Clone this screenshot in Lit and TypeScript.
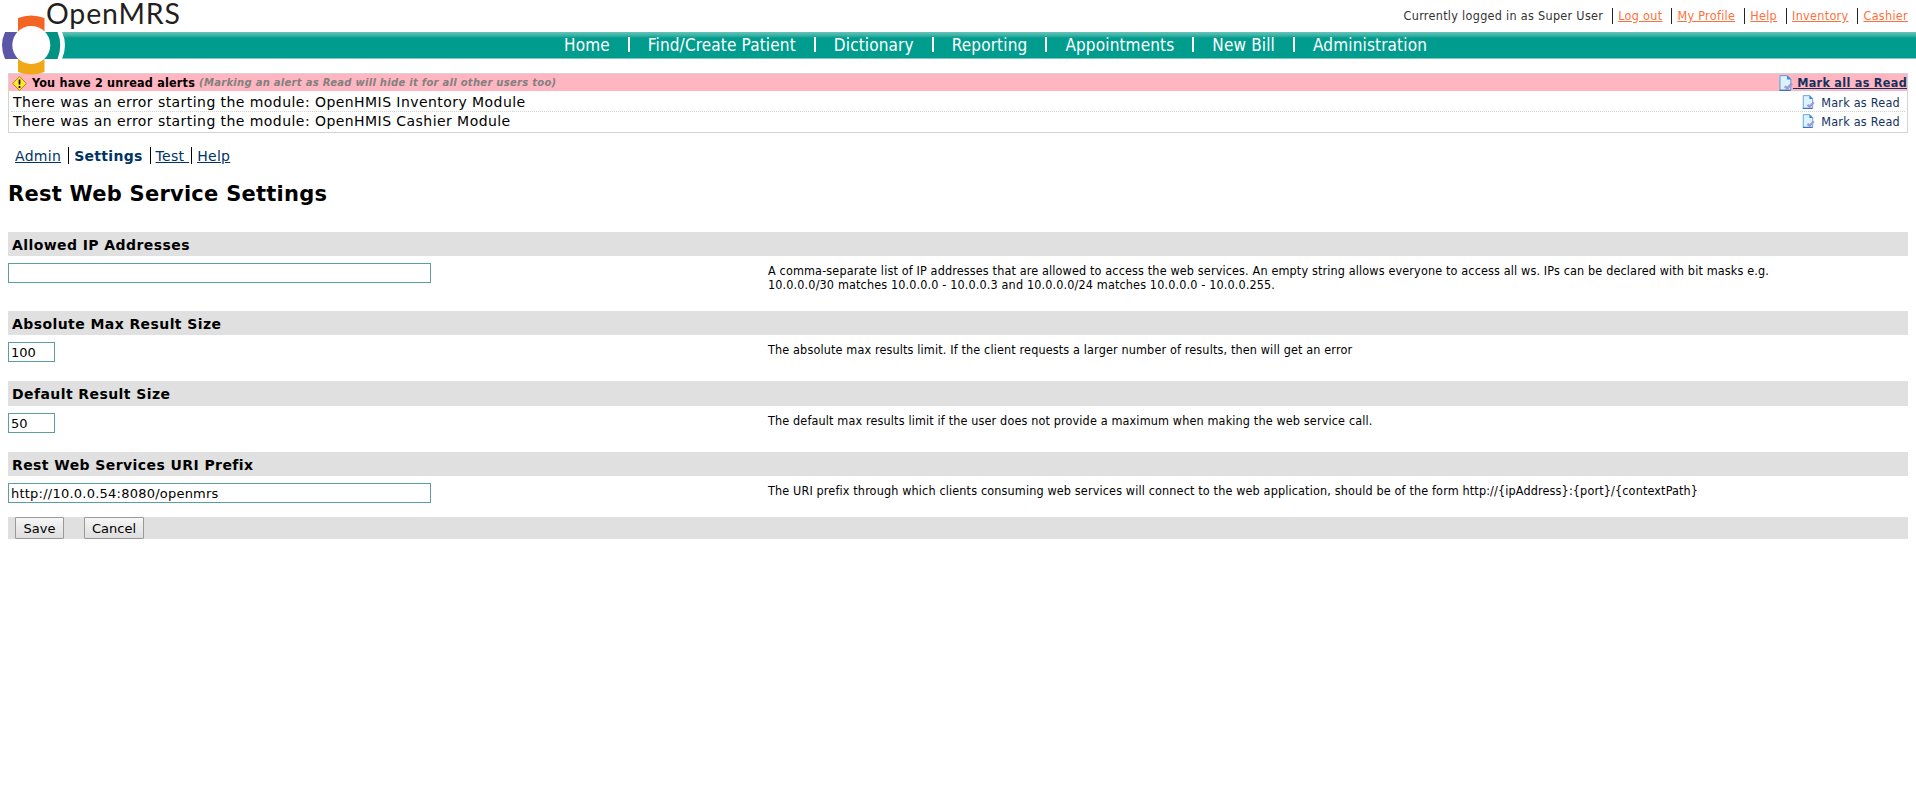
import { LitElement, html, css, svg } from 'lit';
import { customElement, property } from 'lit/decorators.js';

interface Setting {
  title: string;
  value: string;
  wide: boolean;
  description: string;
}

const NAV = [
  'Home',
  'Find/Create Patient',
  'Dictionary',
  'Reporting',
  'Appointments',
  'New Bill',
  'Administration',
];

const USER_LINKS = ['Log out', 'My Profile', 'Help', 'Inventory', 'Cashier'];

const ALERTS = [
  'There was an error starting the module: OpenHMIS Inventory Module',
  'There was an error starting the module: OpenHMIS Cashier Module',
];

const SETTINGS: Setting[] = [
  {
    title: 'Allowed IP Addresses',
    value: '',
    wide: true,
    description:
      'A comma-separate list of IP addresses that are allowed to access the web services. An empty string allows everyone to access all ws. IPs can be declared with bit masks e.g. 10.0.0.0/30 matches 10.0.0.0 - 10.0.0.3 and 10.0.0.0/24 matches 10.0.0.0 - 10.0.0.255.',
  },
  {
    title: 'Absolute Max Result Size',
    value: '100',
    wide: false,
    description:
      'The absolute max results limit. If the client requests a larger number of results, then will get an error',
  },
  {
    title: 'Default Result Size',
    value: '50',
    wide: false,
    description:
      'The default max results limit if the user does not provide a maximum when making the web service call.',
  },
  {
    title: 'Rest Web Services URI Prefix',
    value: 'http://10.0.0.54:8080/openmrs',
    wide: true,
    description:
      'The URI prefix through which clients consuming web services will connect to the web application, should be of the form http://{ipAddress}:{port}/{contextPath}',
  },
];

// page with a folded corner and a check mark over it
const readIcon = svg`
  <path d="M1 .7h7.500l3.300 3.300v11.300H1z" fill="#dcf3fc" stroke="#5a9be0" />
  <path d="M.5 15.300h11" stroke="#2f6fc0" stroke-width="1.200" />
  <path d="M8 .5v4h4.200z" fill="#3f86d6" />
  <path d="M5.800 11.200l2.600 2.200 4.600-5" fill="none" stroke="#a19ad4" stroke-width="2.600" />
`;

@customElement('app-header')
class AppHeader extends LitElement {
  static styles = css`
    :host {
      display: block;
      position: relative;
      height: 59px;
    }
    .user-bar {
      display: flex;
      justify-content: flex-end;
      height: 24px;
      padding: 8px 8px 0 0;
      box-sizing: border-box;
      margin-bottom: 8px;
      font-size: 12.5px;
      letter-spacing: 0.3px;
      line-height: 16px;
      color: #333;
      font-family: 'DejaVu Sans Condensed', 'DejaVu Sans', sans-serif;
      font-stretch: condensed;
    }
    .user-bar span {
      padding-right: 9px;
    }
    .user-bar span + span {
      border-left: 1px solid #222;
      padding-left: 5px;
    }
    .user-bar span:last-child {
      padding-right: 0;
    }
    .user-bar a {
      color: #ff6f3c;
      text-decoration: underline;
    }
    nav {
      display: flex;
      justify-content: center;
      align-items: flex-start;
      height: 27px;
      padding: 5px 0 0 75px;
      box-sizing: border-box;
      background: linear-gradient(#66c4ba, #2fae9f 4px, #009d8e 6px);
      border-bottom: 1px solid #7cc8bf;
      font-family: 'DejaVu Sans Condensed', 'DejaVu Sans', sans-serif;
      font-stretch: condensed;
      font-size: 17px;
      letter-spacing: 0.15px;
      line-height: 17px;
      color: #fff;
    }
    nav a {
      height: 15px;
      padding: 0 18px;
      white-space: nowrap;
    }
    nav a + a {
      border-left: 2px solid #fff;
    }
    .logo {
      position: absolute;
      left: 0;
      top: 0;
      width: 190px;
      height: 76px;
      z-index: 1;
      overflow: visible;
    }
    .logo text {
      font-family: Lato, sans-serif;
      font-size: 28.5px;
      fill: #231f20;
    }
  `;

  render() {
    return html`
      <div class="user-bar">
        <span>Currently logged in as Super User</span>
        ${USER_LINKS.map((link) => html`<span><a>${link}</a></span>`)}
      </div>
      <nav>${NAV.map((item) => html`<a>${item}</a>`)}</nav>
      <svg class="logo" viewBox="0 0 190 76">
        <path d="M0 32H62Q68 45 62 59H0z" fill="#fff" />
        <path d="M18 18Q31 13 44.500 18V36H18z" fill="#f26522" />
        <path d="M18 72Q31 77 44.500 72V54H18z" fill="#f0a818" />
        <path d="M5 32Q-1 45 5 59H22V32z" fill="#5b57a6" />
        <path d="M57.500 32Q63 45 57.500 59H40V32z" fill="#009384" />
        <circle cx="31.300" cy="45" r="19" fill="#fff" />
        <text x="46" y="24" textLength="134">OpenMRS</text>
      </svg>
    `;
  }
}

@customElement('alert-box')
class AlertBox extends LitElement {
  @property({ type: Array })
  alerts: Array<string> = [];

  static styles = css`
    :host {
      display: block;
      height: 60px;
      box-sizing: border-box;
      border: 1px solid lightgray;
      background-color: #fff;
    }
    .bar {
      display: flex;
      align-items: center;
      height: 17px;
      padding-left: 3px;
      background-color: lightpink;
      font-size: 12.5px;
      line-height: 15px;
      letter-spacing: 0.2px;
      font-weight: bold;
      font-family: 'DejaVu Sans Condensed', 'DejaVu Sans', sans-serif;
      font-stretch: condensed;
      white-space: pre;
    }
    .count {
      padding-bottom: 1px;
    }
    .warning {
      width: 15px;
      height: 15px;
      margin-right: 5px;
      margin-top: 1px;
    }
    .hint {
      margin-left: 4px;
      font: italic bold 10px 'DejaVu Sans', sans-serif;
      letter-spacing: 0.28px;
      color: gray;
    }
    .mark-all {
      display: flex;
      align-items: center;
      margin-left: auto;
      color: #13315f;
      text-decoration: underline;
      letter-spacing: 0.3px;
    }
    .mark-all span {
      padding-bottom: 1px;
    }
    .mark-all svg {
      width: 14px;
      height: 16px;
      margin-top: 1px;
    }
    .row {
      display: flex;
      justify-content: space-between;
      align-items: center;
      box-sizing: border-box;
      height: 18px;
      margin: 0 2px;
      padding: 0 5px 0 2px;
      font-size: 14px;
      letter-spacing: 0.44px;
    }
    .row:nth-child(2) {
      height: 21px;
      padding-top: 2px;
      border-bottom: 1px dotted lightgray;
    }
    .mark {
      display: flex;
      align-items: center;
      gap: 6px;
      color: #13315f;
      font: 12.5px 'DejaVu Sans Condensed', 'DejaVu Sans', sans-serif;
      font-stretch: condensed;
      letter-spacing: 0.25px;
    }
    .mark svg {
      width: 13px;
      height: 14px;
    }
  `;

  render() {
    return html`
      <div class="bar">
        <svg class="warning" viewBox="0 0 15 15">
          <path d="M7.500 .5l7 7-7 7-7-7z" fill="#fde72e" stroke="#a8861c" />
          <path d="M7.500 3.500v5M7.500 10v2" stroke="#000" stroke-width="1.700" />
        </svg><span class="count">You have 2 unread alerts</span
        ><span class="hint"
          >(Marking an alert as Read will hide it for all other users too)</span
        ><a class="mark-all"
          ><svg viewBox="0 0 14 16">${readIcon}</svg><span> Mark all as Read</span></a
        >
      </div>
      ${this.alerts.map(
        (alert) => html`
          <div class="row">
            <span class="message">${alert}</span>
            <a class="mark"><svg viewBox="0 0 14 16">${readIcon}</svg>Mark as Read</a>
          </div>
        `,
      )}
    `;
  }
}

@customElement('app-root')
class AppRoot extends LitElement {
  static styles = css`
    :host {
      display: block;
      height: 792px;
      overflow: hidden;
      background-color: #fff;
      font-family: 'DejaVu Sans', sans-serif;
      font-size: 14px;
      color: #000;
    }
    main {
      padding: 14px 8px 0;
    }
    .tabs {
      display: flex;
      height: 17px;
      line-height: 18px;
      margin: 14px 0 0 7px;
      color: #003366;
      letter-spacing: 0.3px;
      white-space: pre;
    }
    .tabs span {
      padding-right: 7px;
    }
    .tabs span + span {
      border-left: 1px solid #000;
      padding-left: 5px;
    }
    .tabs .tight {
      padding-right: 2px;
    }
    .tabs a {
      text-decoration: underline;
    }
    h2 {
      margin: 17px 0 25px;
      height: 26px;
      line-height: 26px;
      font-size: 21px;
      letter-spacing: 0.25px;
    }
    .setting {
      height: 71px;
    }
    .setting:nth-of-type(1) {
      height: 79px;
    }
    .setting:nth-of-type(2) {
      height: 70px;
    }
    .setting:nth-of-type(3) h3 {
      height: 25px;
    }
    .setting:nth-of-type(4) {
      height: 65px;
    }
    h3 {
      margin: 0 0 7px;
      padding-left: 4px;
      height: 24px;
      line-height: 26px;
      font-size: 14px;
      letter-spacing: 0.42px;
      background-color: #e0e0e0;
    }
    .body {
      display: grid;
      grid-template-columns: 760px 1020px;
      align-items: start;
    }
    input {
      display: block;
      box-sizing: border-box;
      width: 47px;
      height: 20px;
      padding: 1px 2px;
      border: 1px solid #5a9f9c;
      font: 13px 'DejaVu Sans', sans-serif;
      outline: none;
    }
    input.wide {
      width: 423px;
      letter-spacing: 0.23px;
    }
    .description {
      font: 12.5px 'DejaVu Sans Condensed', 'DejaVu Sans', sans-serif;
      font-stretch: condensed;
      letter-spacing: 0.145px;
      line-height: 14px;
      padding-top: 1px;
    }
    .actions {
      display: flex;
      gap: 20px;
      height: 22px;
      padding-left: 7px;
      background-color: #e0e0e0;
    }
    button {
      height: 22px;
      padding: 0;
      width: 49px;
      border: 1px solid #999;
      border-radius: 1px;
      background: linear-gradient(#f6f6f6, #dedede);
      font: 13px 'DejaVu Sans', sans-serif;
      color: #000;
    }
    button:last-child {
      width: 60px;
    }
  `;

  render() {
    return html`
      <app-header></app-header>
      <main>
        <alert-box .alerts="${ALERTS}"></alert-box>
        <div class="tabs"><span><a>Admin</a></span><span><b>Settings</b></span><span class="tight"><a>Test </a></span><span><a>Help</a></span></div>
        <h2>Rest Web Service Settings</h2>
        <form>
          ${SETTINGS.map(
            (setting) => html`
              <section class="setting">
                <h3>${setting.title}</h3>
                <div class="body">
                  <div>
                    <input class="${setting.wide ? 'wide' : ''}" .value="${setting.value}" />
                  </div>
                  <div class="description">${setting.description}</div>
                </div>
              </section>
            `,
          )}
          <div class="actions">
            <button type="button">Save</button>
            <button type="button">Cancel</button>
          </div>
        </form>
      </main>
    `;
  }
}
